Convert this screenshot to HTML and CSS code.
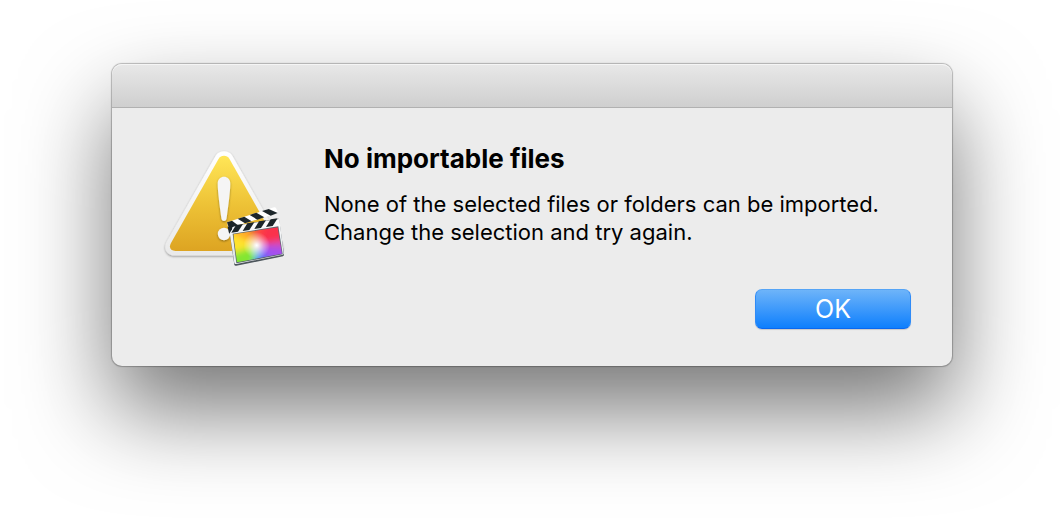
FILE: index.html
```html
<!DOCTYPE html>
<html lang="en">
<head>
<meta charset="utf-8">
<title>No importable files</title>
<link rel="stylesheet" href="styles.css">
</head>
<body>
<main class="dialog" role="alertdialog" aria-labelledby="title" aria-describedby="message">
  <header class="titlebar"></header>
  <div class="content">
    <svg class="icon" viewBox="0 0 128 128" aria-hidden="true">
      <defs>
        <linearGradient id="yellow" x1="0" y1="0" x2="0" y2="1">
          <stop offset="0" stop-color="#ffe657"/>
          <stop offset=".5" stop-color="#eec337"/>
          <stop offset="1" stop-color="#dda422"/>
        </linearGradient>
        <linearGradient id="rim" x1="0" y1="0" x2="0" y2="1">
          <stop offset="0" stop-color="#ffffff"/>
          <stop offset="1" stop-color="#e9e9e9"/>
        </linearGradient>
        <linearGradient id="metal" x1="0" y1="0" x2="0" y2="1">
          <stop offset="0" stop-color="#ffffff"/>
          <stop offset=".8" stop-color="#dfe5e9"/>
          <stop offset="1" stop-color="#f6f8f9"/>
        </linearGradient>
        <radialGradient id="glow">
          <stop offset="0" stop-color="#fff"/>
          <stop offset=".25" stop-color="#fff" stop-opacity=".7"/>
          <stop offset="1" stop-color="#fff" stop-opacity="0"/>
        </radialGradient>
        <clipPath id="screen"><path d="M55 103 188 82 201 161 66 187Z"/></clipPath>
        <filter id="soft" x="-30%" y="-30%" width="160%" height="160%"><feGaussianBlur stdDeviation="10"/></filter>
        <filter id="shade" x="-20%" y="-20%" width="140%" height="140%"><feDropShadow dx="0" dy="1" stdDeviation="1" flood-color="#000" flood-opacity=".4"/></filter>
      </defs>
      <g filter="url(#shade)">
        <path d="M55.500 12C59 5.800 69 5.800 72.500 12L121.500 98C125 105 121 111.500 113.500 111.500H14.500C7 111.500 3 105 6.500 98Z" fill="url(#rim)"/>
      </g>
      <path d="M58.500 15C61 10.700 67 10.700 69.500 15L117 99C119.500 103.500 117.500 107 112.500 107H15.500C10.500 107 8.500 103.500 11 99Z" fill="url(#yellow)"/>
      <g fill="#f5f5f5" filter="url(#shade)">
        <path d="M57.700 39.500C57.700 30.500 70.300 30.500 70.300 39.500C70.300 48 68 64 66.500 75Q66 77 64 77T61.500 75C60 64 57.700 48 57.700 39.500Z"/>
        <circle cx="64" cy="90" r="6.200"/>
      </g>
      <g transform="translate(55 56) scale(.3333)">
        <path d="M39 80 44 98 58 194Q59 198 64 197L204 169Q208 167 207 163L192 56Z" fill="#4d565c"/>
        <path d="M39 80 44 98 58 189Q59 193 64 192L204 164Q207 163 206 159L193 57Z" fill="url(#metal)"/>
        <path d="M36 67 177 22Q181 21 183 24L188 35 187 40 40 85Z" fill="#fff"/>
        <g fill="#1c2529">
          <path d="M36 67 51 62 69 76 42 85Z"/>
          <path d="M68 56 88 50 110 64 90 70Z"/>
          <path d="M104 45 124 38 148 52 127 59Z"/>
          <path d="M141 33 161 27 188 39 167 47Z"/>
          <path d="M38 80 53 78 51 88 43 101 41 96Z"/>
          <path d="M63 75 84 72 69 95 49 98Z"/>
          <path d="M97 70 118 67 103 90 83 93Z"/>
          <path d="M132 64 153 61 138 84 118 87Z"/>
          <path d="M167 58 188 55 173 78 153 81Z"/>
        </g>
        <path d="M53 101 190 79 203 163 64 190Z" fill="#59636b"/>
        <g clip-path="url(#screen)">
          <g filter="url(#soft)">
            <path d="M125 136 20 40 105 60Z" fill="#ff892f"/>
            <path d="M125 136 105 40 250 20 170 75Z" fill="#ff4b3c"/>
            <path d="M125 136 155 60 260 50 240 130Z" fill="#fa304c"/>
            <path d="M125 136 250 110 240 155Z" fill="#d94cae"/>
            <path d="M125 136 250 145 200 230Z" fill="#a550ef"/>
            <path d="M125 136 215 215 140 240Z" fill="#6f65f5"/>
            <path d="M125 136 150 240 98 240Z" fill="#38a3fa"/>
            <path d="M125 136 110 240 10 230 20 155Z" fill="#83e631"/>
            <path d="M125 136 10 175 10 70Z" fill="#ffe32f"/>
            <path d="M125 136 10 80 10 20 70 40Z" fill="#ffab2c"/>
          </g>
          <circle cx="125" cy="136" r="40" fill="url(#glow)"/>
        </g>
      </g>
    </svg>
    <div class="text">
      <h1 class="title" id="title">No importable files</h1>
      <p class="message" id="message">None of the selected files or folders can be imported. Change the selection and try again.</p>
    </div>
  </div>
  <footer class="actions">
    <button class="ok" type="button">OK</button>
  </footer>
</main>
</body>
</html>
```
FILE: styles.css
```css
* {
  box-sizing: border-box;
}

body {
  min-height: 100vh;
  margin: 0;
  padding: 64px 112px;
  background: #fff;
  color: #000;
  font-family: Inter, "Liberation Sans", sans-serif;
}

.dialog {
  background: #ececec;
  border-radius: 10px;
  box-shadow: 0 0 1px 1px rgba(0, 0, 0, .25), 0 44px 90px rgba(0, 0, 0, .54);
}

.titlebar {
  height: 44px;
  border-bottom: 1px solid #b1b1b1;
  border-radius: 10px 10px 0 0;
  background: linear-gradient(#e8e8e8, #cfcfcf);
  box-shadow: inset 0 1px #f5f5f5;
}

.content {
  display: flex;
  gap: 36px;
  padding: 36px 48px 17px;
}

.icon {
  flex: none;
  width: 128px;
  height: 128px;
}

.text {
  flex: 1;
}

.title {
  margin: 0 0 16px;
  font-size: 26px;
  line-height: 30px;
  font-weight: 700;
}

.message {
  margin: 0;
  font-size: 22px;
  line-height: 28px;
}

.actions {
  display: flex;
  justify-content: flex-end;
  padding: 0 41px 37px;
}

.ok {
  width: 156px;
  height: 40px;
  padding: 0;
  border: 1px solid;
  border-color: #55a4f6 #2f8bf7 #0a68f0;
  border-radius: 7px;
  background: linear-gradient(#6eb4f9, #0e7ffd);
  box-shadow: 0 1px 1px rgba(0, 0, 0, .15);
  color: #fff;
  font: 400 25px/38px Inter, "Liberation Sans", sans-serif;
}
```
